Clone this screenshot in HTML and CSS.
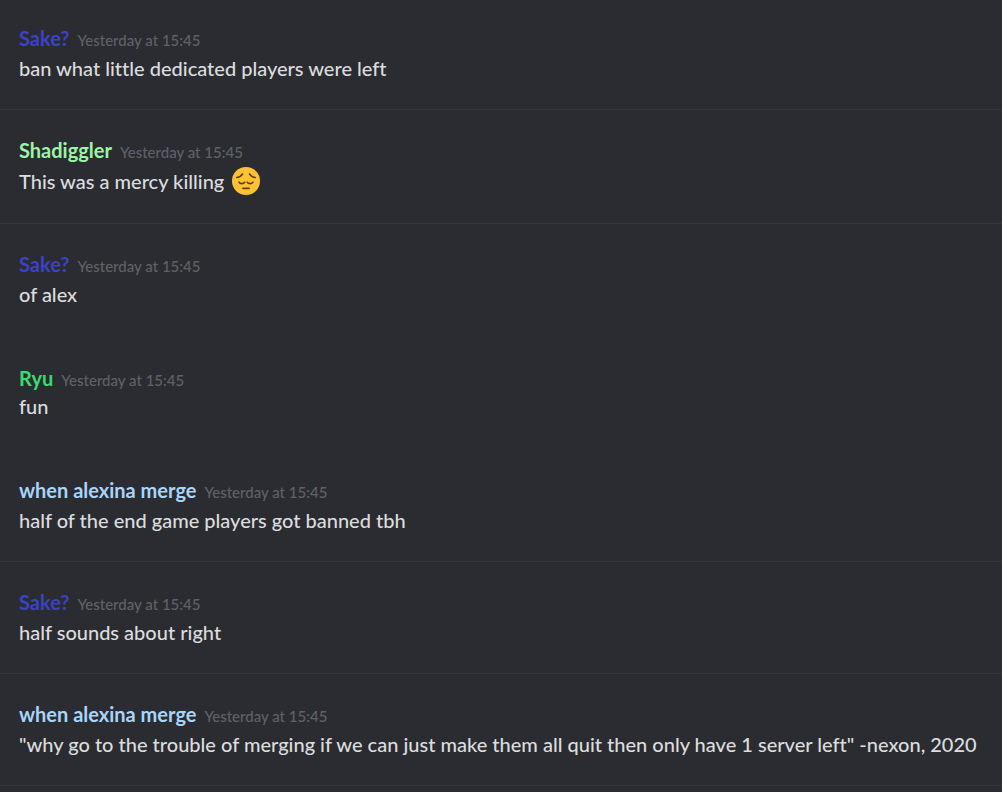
FILE: index.html
```html
<!DOCTYPE html>
<html lang="en">
<head>
<meta charset="utf-8">
<meta name="viewport" content="width=device-width, initial-scale=1">
<title>Chat</title>
<link rel="stylesheet" href="styles.css">
</head>
<body>
<main class="chat">
  <article class="message divided first">
    <header class="head"><h2 class="name indigo">Sake?</h2><time class="time">Yesterday at 15:45</time></header>
    <p class="text">ban what little dedicated players were left</p>
  </article>
  <article class="message divided">
    <header class="head"><h2 class="name mint">Shadiggler</h2><time class="time">Yesterday at 15:45</time></header>
    <p class="text with-emoji">This was a mercy killing
      <svg class="emoji" viewBox="0 0 36 36" role="img" aria-label="pensive face">
        <circle cx="18" cy="18" r="18" fill="#ffc233"/>
        <g fill="none" stroke="#604016" stroke-width="2" stroke-linecap="round" stroke-linejoin="round">
          <path d="M6 13.500c3.500-.5 6-2 7.500-4.500M30 13.500c-3.500-.5-6-2-7.500-4.500"/>
          <path d="M9 19.500c1.500 2.500 6 2.500 7.500 0M19.500 19.500c1.500 2.500 6 2.500 7.500 0"/>
          <path d="M14 27.500h8"/>
        </g>
      </svg></p>
  </article>
  <article class="message tall">
    <header class="head"><h2 class="name indigo">Sake?</h2><time class="time">Yesterday at 15:45</time></header>
    <p class="text">of alex</p>
  </article>
  <article class="message tight">
    <header class="head"><h2 class="name green">Ryu</h2><time class="time">Yesterday at 15:45</time></header>
    <p class="text">fun</p>
  </article>
  <article class="message divided">
    <header class="head"><h2 class="name sky">when alexina merge</h2><time class="time">Yesterday at 15:45</time></header>
    <p class="text">half of the end game players got banned tbh</p>
  </article>
  <article class="message divided">
    <header class="head"><h2 class="name indigo">Sake?</h2><time class="time">Yesterday at 15:45</time></header>
    <p class="text">half sounds about right</p>
  </article>
  <article class="message divided">
    <header class="head"><h2 class="name sky">when alexina merge</h2><time class="time">Yesterday at 15:45</time></header>
    <p class="text">"why go to the trouble of merging if we can just make them all quit then only have 1 server left" -nexon, 2020</p>
  </article>
</main>
</body>
</html>
```
FILE: styles.css
```css
body {
  margin: 0;
  background: #2b2c31;
  color: #dcddde;
  font-family: Lato, "Noto Sans", sans-serif;
  font-variant-ligatures: no-common-ligatures;
}
.message {
  padding: 25px 12px 26px 19px;
  border-bottom: 1px solid transparent;
}
.message.first { padding-top: 23px; }
.message.tall { padding-bottom: 28px; }
.message.tight { padding-bottom: 28px; }
.message.tight .head { height: 28px; }
.message.divided { border-bottom-color: #34363b; }
.head {
  display: flex;
  align-items: baseline;
  gap: 8px;
  height: 30px;
}
.name {
  margin: 0;
  font-size: 20px;
  font-weight: 700;
  line-height: 30px;
}
.indigo { color: #3b43c4; }
.mint { color: #9bf5a5; }
.green { color: #38dc70; }
.sky { color: #a9d4fc; }
.time {
  color: #5f6167;
  font-size: 15px;
  font-weight: 500;
  line-height: 30px;
}
.text {
  margin: 0;
  font-size: 20px;
  font-weight: 500;
  line-height: 30px;
}
.with-emoji {
  display: flex;
  align-items: center;
  gap: 8px;
  line-height: 32px;
}
.emoji {
  width: 28px;
  height: 28px;
}
```
